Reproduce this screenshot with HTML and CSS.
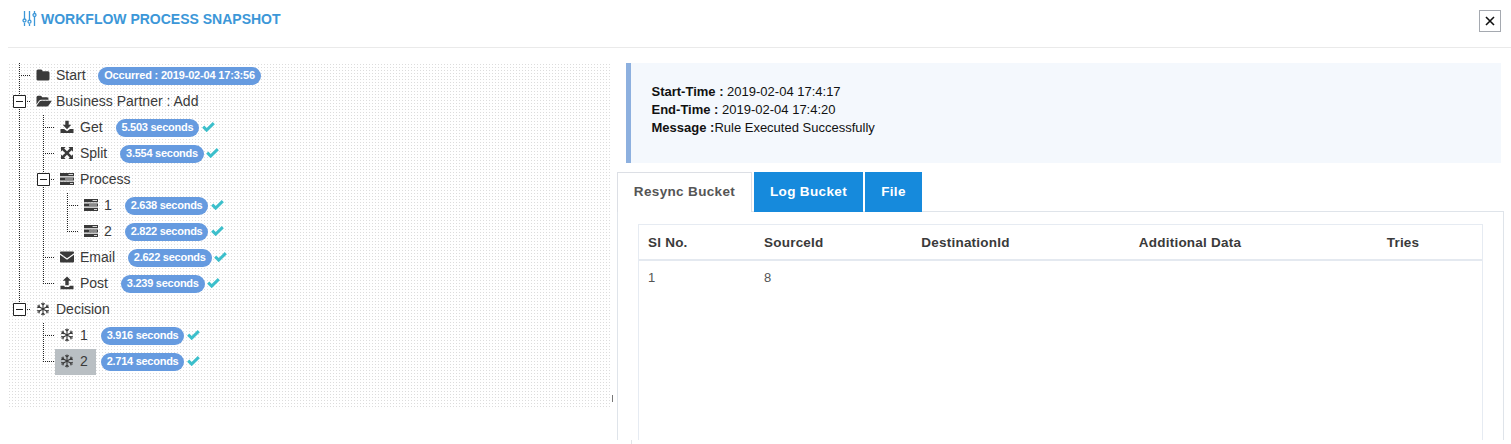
FILE: index.html
```html
<!DOCTYPE html>
<html lang="en">
<head>
<meta charset="utf-8">
<title>Workflow Process Snapshot</title>
<link rel="stylesheet" href="styles.css">
</head>
<body>
<svg class="defs" width="0" height="0">
  <symbol id="folder" viewBox="0 0 14 14"><path d="M.5 3.200Q.5 1.500 2 1.500h3Q6.500 1.500 6.500 3.200H12q1.500 0 1.500 1.500V11q0 1.500-1.500 1.500H2Q.5 12.500.5 11z"/></symbol>
  <symbol id="open" viewBox="0 0 16 14"><path d="M.5 10.500V3.200Q.5 1.700 2 1.700h2.500Q6 1.700 6 3.200h5q1.500 0 1.500 1.500v1H5Q3.800 5.700 3 6.800z"/><path d="M5.200 6.700H15q1 0 .4.900l-2.800 4q-.6.900-1.700.9H1.200q-1 0-.4-.9l2.800-4q.6-.9 1.600-.9z"/></symbol>
  <symbol id="down" viewBox="0 0 14 14"><path d="M5.300.8h3.400v4h2.600L7 9.200 2.700 4.800h2.600z"/><path d="M.5 9h3.600L7 11.300 9.900 9h3.600v4H.5z"/></symbol>
  <symbol id="up" viewBox="0 0 14 14"><path d="M7 .5l4.300 4.300H8.700v4.400H5.300V4.800H2.700z"/><path d="M.5 9.700h3.700q.3 1.200 1.400 1.200h2.800q1.100 0 1.400-1.200h3.700v3.600H.5z"/></symbol>
  <symbol id="expand" viewBox="0 0 14 14"><path d="M1 1h4.600L4.200 2.400 7 5.200l2.800-2.800L8.400 1H13v4.600l-1.400-1.400L8.800 7l2.800 2.800L13 8.400V13H8.400l1.400-1.400L7 8.800l-2.800 2.800L5.600 13H1V8.400l1.400 1.400L5.200 7 2.400 4.200 1 5.600z"/></symbol>
  <symbol id="server" viewBox="0 0 14 12"><path d="M0 0h14v3.200H0zM0 4.400h14v3.200H0zM0 8.800h14V12H0z"/><path d="M8.500 1.500H13M5 6H13M10 10.500h3" stroke="#fff" stroke-width=".8" fill="none"/></symbol>
  <symbol id="mail" viewBox="0 0 14 12"><path d="M0 1.500Q0 .5 1 .5h12q1 0 1 1v.7L7 7.300 0 2.200z"/><path d="M0 3.700l7 5 7-5v6.800q0 1-1 1H1q-1 0-1-1z"/></symbol>
  <symbol id="snow" viewBox="0 0 14 14"><path d="M7 .5v13M1.400 3.750l11.200 6.500M12.600 3.750L1.400 10.250M5.300 1.300L7 3l1.700-1.700M5.300 12.700L7 11l1.700 1.700M1.200 5.700l2.300-.7-.6-2.300M12.800 8.300l-2.300.7.6 2.300M12.800 5.700l-2.300-.7.6-2.300M1.200 8.300l2.300.7-.6 2.300" fill="none" stroke="currentColor" stroke-width="1.100"/></symbol>
  <symbol id="check" viewBox="0 0 13 10"><path d="M1.200 4.600l3.500 3.500L11.800 1.200" fill="none" stroke="#3cbfcb" stroke-width="3"/></symbol>
  <symbol id="minus" viewBox="0 0 13 13"><path d="M.5.5h12v12H.5z" fill="#fff" stroke="#222"/><path d="M3 6.500h7" stroke="#222"/></symbol>
</svg>

<header class="head">
  <h1 class="title">
    <svg class="sliders" viewBox="0 0 15 15"><path d="M2.500 0v8M2.500 12v3M7.500 0v9M7.500 13v2M12.500 0v2M12.500 6v9"/><circle cx="2.500" cy="9.500" r="1.500"/><circle cx="7.500" cy="10.700" r="1.500"/><circle cx="12.500" cy="4" r="1.500"/></svg>
    <span>WORKFLOW PROCESS SNAPSHOT</span>
  </h1>
  <button class="close" aria-label="Close"><svg viewBox="0 0 10 10"><path d="M1 1l8 8M9 1L1 9"/></svg></button>
</header>

<main class="main">
  <section class="tree">
    <ul>
      <li><div class="row"><i class="arm"></i><span class="node"><svg><use href="#folder"/></svg>Start</span><b class="badge wide">Occurred : 2019-02-04 17:3:56</b></div></li>
      <li><div class="row"><i class="arm toggle"><svg><use href="#minus"/></svg></i><span class="node"><svg class="w16"><use href="#open"/></svg>Business Partner : Add</span></div>
        <ul>
          <li><div class="row"><i class="arm"></i><span class="node"><svg><use href="#down"/></svg>Get</span><b class="badge">5.503 seconds</b><svg class="check"><use href="#check"/></svg></div></li>
          <li><div class="row"><i class="arm"></i><span class="node"><svg><use href="#expand"/></svg>Split</span><b class="badge">3.554 seconds</b><svg class="check"><use href="#check"/></svg></div></li>
          <li><div class="row"><i class="arm toggle"><svg><use href="#minus"/></svg></i><span class="node"><svg class="h12"><use href="#server"/></svg>Process</span></div>
            <ul>
              <li><div class="row"><i class="arm"></i><span class="node"><svg class="h12"><use href="#server"/></svg>1</span><b class="badge">2.638 seconds</b><svg class="check"><use href="#check"/></svg></div></li>
              <li><div class="row"><i class="arm"></i><span class="node"><svg class="h12"><use href="#server"/></svg>2</span><b class="badge">2.822 seconds</b><svg class="check"><use href="#check"/></svg></div></li>
            </ul>
          </li>
          <li><div class="row"><i class="arm"></i><span class="node"><svg class="h12"><use href="#mail"/></svg>Email</span><b class="badge">2.622 seconds</b><svg class="check"><use href="#check"/></svg></div></li>
          <li><div class="row"><i class="arm"></i><span class="node"><svg><use href="#up"/></svg>Post</span><b class="badge">3.239 seconds</b><svg class="check"><use href="#check"/></svg></div></li>
        </ul>
      </li>
      <li><div class="row"><i class="arm toggle"><svg><use href="#minus"/></svg></i><span class="node"><svg><use href="#snow"/></svg>Decision</span></div>
        <ul>
          <li><div class="row"><i class="arm"></i><span class="node"><svg><use href="#snow"/></svg>1</span><b class="badge">3.916 seconds</b><svg class="check"><use href="#check"/></svg></div></li>
          <li><div class="row"><i class="arm"></i><span class="node selected"><svg><use href="#snow"/></svg>2</span><b class="badge">2.714 seconds</b><svg class="check"><use href="#check"/></svg></div></li>
        </ul>
      </li>
    </ul>
  </section>
  <div class="grip"></div>
  <section class="detail">
    <div class="note">
      <p><b>Start-Time :</b> 2019-02-04 17:4:17</p>
      <p><b>End-Time :</b> 2019-02-04 17:4:20</p>
      <p><b>Message :</b>Rule Executed Successfully</p>
    </div>
    <nav class="tabs">
      <a class="tab active">Resync Bucket</a>
      <a class="tab log">Log Bucket</a>
      <a class="tab file">File</a>
    </nav>
    <div class="pane">
      <table class="grid">
        <colgroup><col class="c1"><col class="c2"><col class="c3"><col class="c4"><col></colgroup>
        <thead><tr><th>Sl No.</th><th>SourceId</th><th>DestinationId</th><th>Additional Data</th><th class="tries">Tries</th></tr></thead>
        <tbody><tr><td>1</td><td>8</td><td></td><td></td><td></td></tr></tbody>
      </table>
    </div>
    <div class="stub"></div>
  </section>
</main>
</body>
</html>
```
FILE: styles.css
```css
* { box-sizing: border-box; }
body { margin: 0; height: 444px; overflow: hidden; background: #fff; color: #3a3a3a; font-family: "Liberation Sans", Arial, sans-serif; }
ul { list-style: none; margin: 0; padding: 0; }
p { margin: 0; }
svg { display: block; fill: currentColor; }
.defs { display: none; }

.head { height: 48px; margin-left: 8px; padding: 10px 10px 0 14px; border-bottom: 1px solid #eaeaea; display: flex; justify-content: space-between; align-items: flex-start; }
.title { margin: 0; display: flex; align-items: center; gap: 4px; height: 18px; color: #3c97d8; font-size: 14px; line-height: 18px; font-weight: bold; }
.sliders { width: 15px; height: 15px; stroke: #3c97d8; stroke-width: 1.3; fill: none; margin-top: -2px; }
.close { width: 22px; height: 22px; padding: 0; border: 1px solid #a5a9b0; background: #fff; display: flex; align-items: center; justify-content: center; }
.close svg { width: 10px; height: 10px; stroke: #111; stroke-width: 1.6; }

.main { display: flex; padding-left: 8px; margin-top: 14px; }
.tree {
  width: 604px; height: 346px;
  background:
    linear-gradient(90deg, #fff 1px, transparent 1px 2px, #fff 2px) 0 0 / 3px 3px,
    linear-gradient(#fff 2px, #dcdcdc 2px) 0 0 / 3px 3px;
}
.tree li { background: repeating-linear-gradient(#222 0 1px, transparent 1px 2px) 11px 1px / 1px 100% no-repeat; }
.tree li:last-child { background-size: 1px 13px; }
.tree li ul { padding-left: 24px; }
.row { display: flex; align-items: center; height: 26px; }
.arm { width: 23px; height: 26px; background: repeating-linear-gradient(90deg, #222 0 1px, transparent 1px 2px) 13px 13px / 9px 1px no-repeat; }
.toggle { padding: 7px 0 0 5px; }
.toggle svg { width: 13px; height: 13px; }
.node { display: flex; align-items: center; height: 26px; padding: 0 8px 0 4.500px; margin-right: 5px; font-size: 14px; line-height: 26px; white-space: nowrap; }
.node svg { width: 14px; height: 14px; margin-right: 6.500px; }
.node svg.w16 { width: 16px; margin-right: 4.500px; }
.node svg.h12 { height: 12px; }
.selected { background: linear-gradient(transparent 1px, #b9bfc3 1px); box-shadow: 0 1px #b9bfc3; }
.badge { width: 83.500px; height: 18px; margin-top: 2px; border-radius: 9px; background: #669be0; color: #fff; font-size: 11px; letter-spacing: -.26px; line-height: 17px; text-align: center; white-space: nowrap; }
.wide { width: 163px; margin-left: -.5px; letter-spacing: -.18px; }
.check { width: 13px; height: 10px; margin-left: 2.500px; }

.grip { width: 1px; height: 7px; margin-top: 333px; background: #777; }
.detail { width: 891px; padding-left: 4px; margin-top: 1px; }
.note { width: 875px; height: 100px; margin-left: 9px; padding: 20px 0 0 20.500px; border-left: 5px solid #8db0df; background: #f4f8fd; color: #111; font-size: 13px; line-height: 18px; }
.tabs { display: flex; align-items: flex-start; height: 40px; margin-top: 9px; gap: 2px; }
.tab { height: 40px; background: #168adc; color: #fff; font-size: 13.500px; letter-spacing: .35px; font-weight: bold; line-height: 39px; text-align: center; }
.active { width: 135px; border: 1px solid #dcdfe5; border-bottom: 0; background: #fff; color: #555; line-height: 37px; }
.log { width: 109px; }
.file { width: 57px; }
.pane { width: 887px; height: 229px; margin-top: -1px; padding: 12px 20px 0; border: solid #dfe4ea; border-width: 1px 1px 0; }
.grid { width: 845px; height: 216px; border: 1px solid #e6ebf2; border-bottom: 0; border-collapse: separate; border-spacing: 0; table-layout: fixed; font-size: 13px; }
.grid th { height: 36px; padding: 0; font-size: 13.500px; letter-spacing: .22px; border-bottom: 2px solid #e4e9f0; text-align: center; }
.grid td { padding: 9px 0 0 9px; vertical-align: top; color: #555; }
.grid th:first-child, .grid th:nth-child(2) { text-align: left; padding-left: 9px; }
.grid .tries { padding-left: 14px; }
.c1 { width: 116px; }
.c2 { width: 106px; }
.c3 { width: 209px; }
.c4 { width: 240px; }
.stub { width: 1px; height: 4px; margin-left: 14px; background: #e1e4e8; }
```
